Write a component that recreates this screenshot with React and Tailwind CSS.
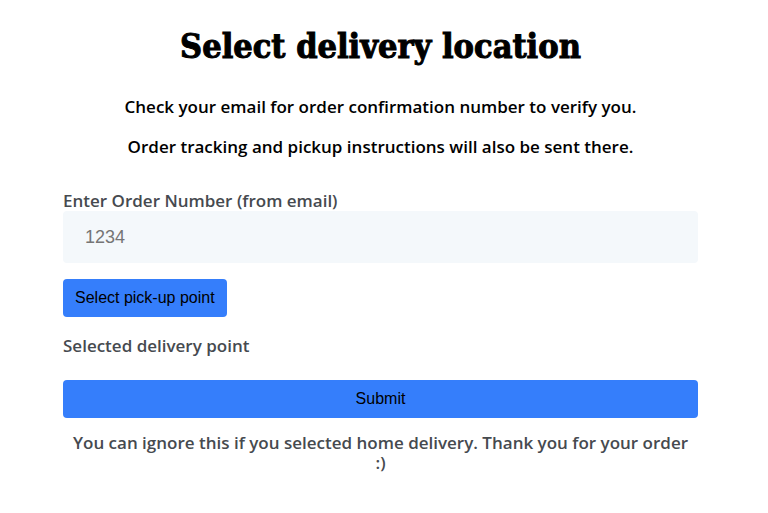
// src/App.jsx
import React, { useState } from "react";

const BUTTON_CLASS =
  "h-[38px] px-3 rounded-[4px] bg-[#357efb] text-black text-base font-['Liberation_Sans',sans-serif]";

export default function App() {
  const [orderNumber, setOrderNumber] = useState("");
  const [pickupPoint, setPickupPoint] = useState("");

  return (
    <main className="pl-[63px] pr-[70px] pt-6 pb-10 bg-white font-['Open_Sans',sans-serif] text-[17px] leading-5 font-semibold text-[#464a4f]">
      <div className="text-center text-black">
        <h1 className="text-[34px] leading-[44px] font-bold font-['DejaVu_Serif_Condensed','DejaVu_Serif',serif] [-webkit-text-stroke:1px_black]">
          Select delivery location
        </h1>
        <p className="mt-[29px]">Check your email for order confirmation number to verify you.</p>
        <p className="mt-5">Order tracking and pickup instructions will also be sent there.</p>
      </div>

      <form className="mt-[34px]" onSubmit={(e) => e.preventDefault()}>
        <label htmlFor="order-number" className="block">
          Enter Order Number (from email)
        </label>
        <input
          id="order-number"
          type="text"
          placeholder="1234"
          value={orderNumber}
          onChange={(e) => setOrderNumber(e.target.value)}
          className="block w-full h-[52px] px-[22px] rounded-[4px] bg-[#f4f8fb] font-['Liberation_Sans',sans-serif] text-lg font-normal text-black placeholder:text-[#757575]"
        />

        <button
          type="button"
          onClick={() => setPickupPoint("")}
          className={`${BUTTON_CLASS} block mt-4 font-normal`}
        >
          Select pick-up point
        </button>

        <p className="mt-[19px]">Selected delivery point {pickupPoint}</p>

        <button type="submit" className={`${BUTTON_CLASS} block w-full mt-6 font-normal`}>
          Submit
        </button>
      </form>

      <p className="mt-[15px] px-1 text-center">
        You can ignore this if you selected home delivery. Thank you for your order :)
      </p>
    </main>
  );
}
